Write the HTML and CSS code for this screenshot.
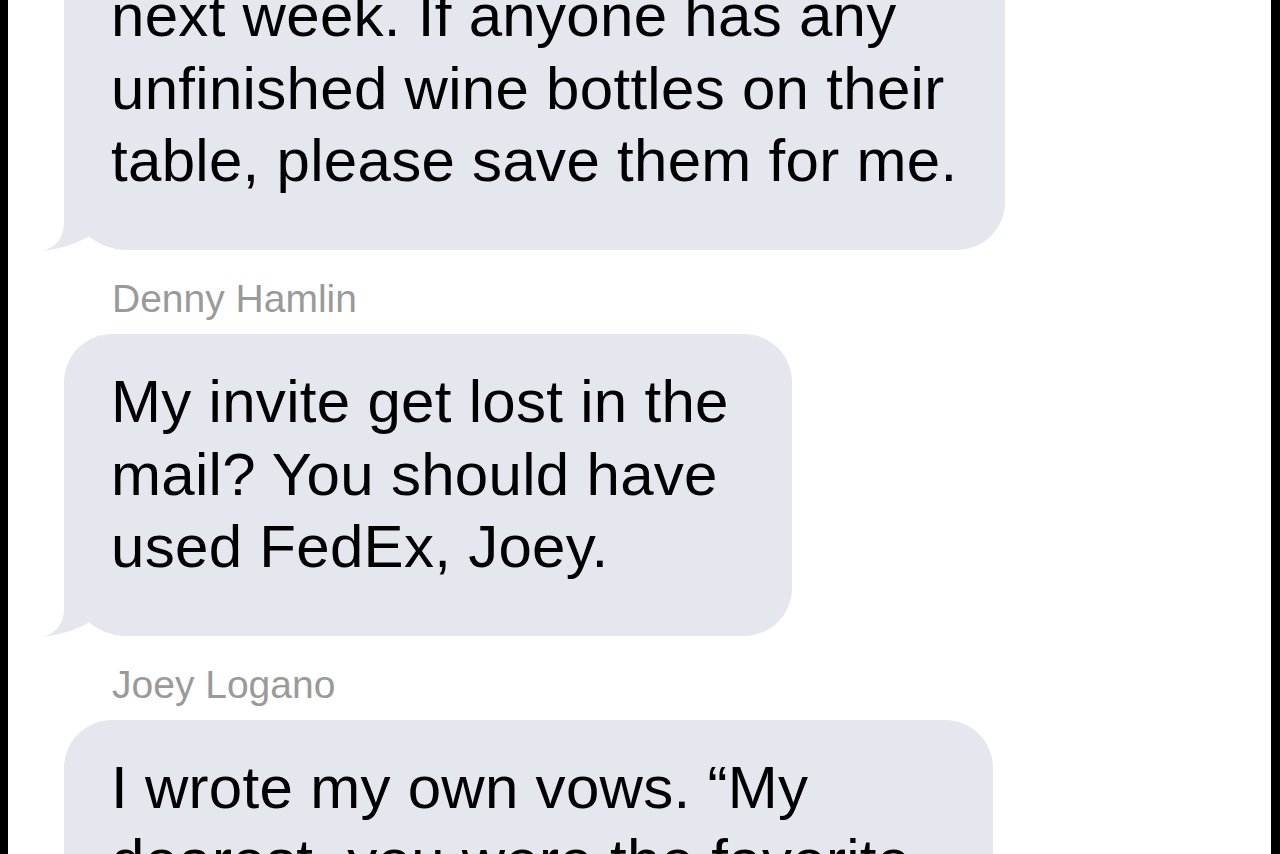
FILE: index.html
```html
<!DOCTYPE html>
<html lang="en">
<head>
<meta charset="utf-8">
<title>Messages</title>
<link rel="stylesheet" href="styles.css">
</head>
<body>
<div class="screen">
  <div class="thread">
    <div class="bubble bubble-1">
      <p class="text">next week. If anyone has any<br>unfinished wine bottles on their<br>table, please save them for me.</p>
      <svg class="tail" viewBox="-21 -64 51 65" aria-hidden="true"><path d="M0,-64 L0,-28 C0,-12 -8,-3 -21,1 C-5,-1 12,-6 24,-13 L30,-64 Z"/></svg>
    </div>
    <div class="sender">Denny Hamlin</div>
    <div class="bubble bubble-2">
      <p class="text">My invite get lost in the<br>mail? You should have<br>used FedEx, Joey.</p>
      <svg class="tail" viewBox="-21 -64 51 65" aria-hidden="true"><path d="M0,-64 L0,-28 C0,-12 -8,-3 -21,1 C-5,-1 12,-6 24,-13 L30,-64 Z"/></svg>
    </div>
    <div class="sender">Joey Logano</div>
    <div class="bubble bubble-3">
      <p class="text">I wrote my own vows. “My<br>dearest, you were the favorite</p>
    </div>
  </div>
</div>
</body>
</html>
```
FILE: styles.css
```css
html, body {
  margin: 0;
  padding: 0;
  background: #000;
  height: 100%;
  overflow: hidden;
}

.screen {
  margin: 0 9px 0 8px;
  background: #fff;
  min-height: 100vh;
  font-family: "Liberation Sans", Arial, Helvetica, sans-serif;
}

.thread {
  display: flex;
  flex-direction: column;
  align-items: flex-start;
  padding-left: 56px;
  margin-top: -52px;
}

.bubble {
  position: relative;
  box-sizing: border-box;
  background: #e5e7ef;
  border-radius: 48px;
  border-bottom-left-radius: 64px;
  padding: 32px 40px 52px 47px;
}

.bubble-1 { width: 941px; }
.bubble-2 { width: 728px; }
.bubble-3 { width: 929px; border-bottom-left-radius: 48px; }

.text {
  margin: 0;
  font-size: 60px;
  line-height: 72.5px;
  letter-spacing: 0.3px;
  color: #000;
  white-space: nowrap;
}

.tail {
  position: absolute;
  left: -21px;
  bottom: -1px;
  width: 51px;
  height: 65px;
  fill: #e5e7ef;
}

.sender {
  margin: 26px 0 12.5px 48px;
  font-size: 39px;
  line-height: 46px;
  color: #9a9a9a;
}
```
